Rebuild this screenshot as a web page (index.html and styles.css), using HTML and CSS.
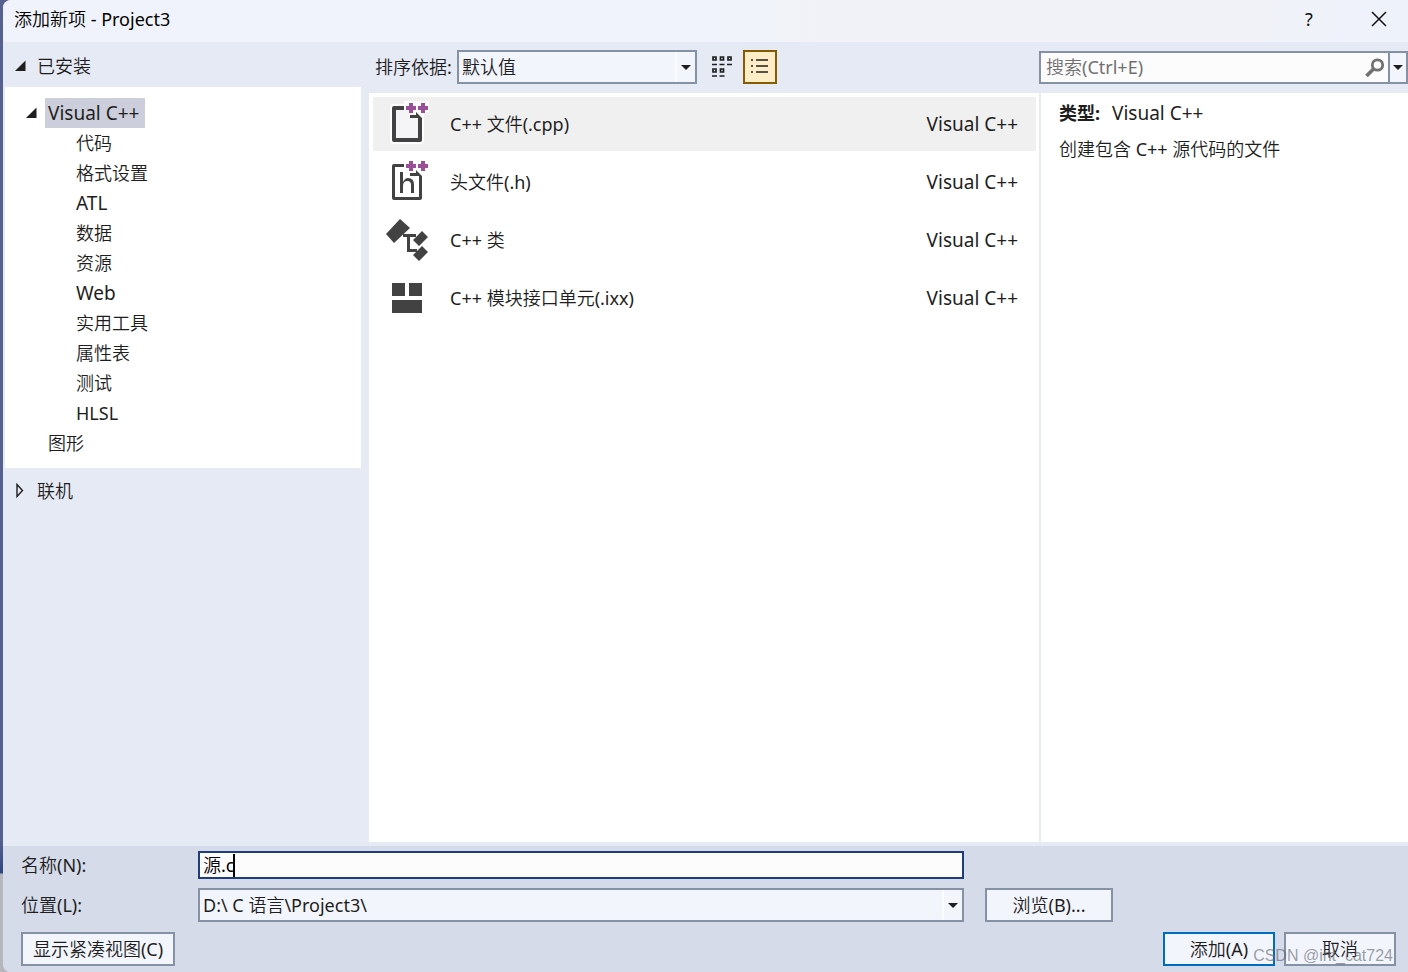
FILE: index.html
```html
<!DOCTYPE html>
<html lang="zh-CN">
<head>
<meta charset="utf-8">
<title>添加新项 - Project3</title>
<link rel="stylesheet" href="styles.css">
</head>
<body>
<div class="dialog">
  <header class="titlebar">
    <h1 class="title">添加新项 - Project3</h1>
    <button class="title-btn help" type="button" aria-label="帮助">?</button>
    <button class="title-btn" type="button" aria-label="关闭">
      <svg width="16" height="16" viewBox="0 0 16 16"><path d="M1 1 15 15M15 1 1 15" stroke="#111" stroke-width="1.5" fill="none"/></svg>
    </button>
  </header>

  <div class="main">
    <nav class="sidebar">
      <button class="section" type="button" aria-expanded="true">
        <svg class="twisty" width="12" height="12" viewBox="0 0 12 12"><path d="M10.500 0.500V11H0Z" fill="#1e1e1e"/></svg>已安装
      </button>
      <div class="tree">
        <button class="root" type="button" aria-expanded="true">
          <svg class="twisty" width="12" height="12" viewBox="0 0 12 12"><path d="M10.500 0.500V11H0Z" fill="#1e1e1e"/></svg><span class="selected latin">Visual C++</span>
        </button>
        <ul class="branch">
          <li>代码</li><li>格式设置</li><li class="latin">ATL</li><li>数据</li><li>资源</li><li class="latin">Web</li><li>实用工具</li><li>属性表</li><li>测试</li><li>HLSL</li>
        </ul>
        <div class="leaf">图形</div>
      </div>
      <button class="section online" type="button" aria-expanded="false">
        <svg class="twisty" width="12" height="16" viewBox="0 0 12 16"><path d="M2 1.500V13.500L7.500 7.500Z" fill="none" stroke="#1e1e1e" stroke-width="1.400"/></svg>联机
      </button>
    </nav>

    <section class="center">
      <div class="toolbar">
        <label class="sort-label" for="sort">排序依据:</label>
        <div class="combo sort">
          <select id="sort"><option>默认值</option></select>
          <span class="arrow"></span>
        </div>
        <button class="view" type="button" aria-label="小图标">
          <svg width="22" height="24" viewBox="0 0 22 24"><g fill="none" stroke="#1e1e1e" stroke-width="1.700"><path d="M2 2h3v3H2zM9.500 2h3v3h-3zM17 2h3v3h-3zM2 14h3v3H2zM9.500 14h3v3h-3z"/><path d="M1 9.500h5M8.500 9.500h5M16 9.500h5M1 21h5M8.500 21h5"/></g></svg>
        </button>
        <button class="view active" type="button" aria-label="列表" aria-pressed="true">
          <svg width="18" height="18" viewBox="0 0 18 18"><path d="M0 2h2M5 2h12M0 8h2M5 8h12M0 14h2M5 14h12" stroke="#1e1e1e" stroke-width="1.500"/></svg>
        </button>
      </div>
      <ul class="items">
        <li class="item current">
          <svg class="icon" width="44" height="46" viewBox="0 0 44 46">
            <path d="M7 3h11V0h25v12h-5v27q0 4-4 4H8q-4 0-4-4V7q0-4 3-4Z" fill="#fff"/>
            <path d="M10 9h18v8h4v20H10Z" fill="#f5f5f7"/>
            <path d="M18 5H8Q6 5 6 7v32q0 2 2 2h26q2 0 2-2V17l-6-6v3h-6v3h8v20H10V9h8Z" fill="#424242"/>
            <path d="M24 2h4v3h3v4h-3v3h-4V9h-3V5h3ZM36 2h4v3h3v4h-3v3h-4V9h-3V5h3Z" transform="translate(-1 0)" fill="#9b4f96"/>
          </svg>
          <span>C++ 文件(.cpp)</span><span class="lang latin">Visual C++</span>
        </li>
        <li class="item">
          <svg class="icon" width="44" height="46" viewBox="0 0 44 46">
            <path d="M18 5H8Q6 5 6 7v32q0 2 2 2h26q2 0 2-2V17l-6-6v3h-6v3h9v21H9V8h9Z" fill="#424242"/>
            <path d="M14 13h3v10q2-4 5-4 6 0 6 7v8h-3v-8q0-4-3.500-4Q17 22 17 27v7h-3Z" fill="#424242"/>
            <path d="M23 2h4v3h3v4h-3v3h-4V9h-3V5h3ZM35 2h4v3h3v4h-3v3h-4V9h-3V5h3Z" fill="#9b4f96"/>
          </svg>
          <span>头文件(.h)</span><span class="lang latin">Visual C++</span>
        </li>
        <li class="item">
          <svg class="icon" width="44" height="46" viewBox="0 0 44 46">
            <g fill="#424242"><path d="M14 2 24 11 8 26 0 17ZM36 14l6 6-9 9-6-6ZM36 29l6 6-9 9-6-6Z"/><path d="M17 17h13v3h-6v12h7v3H21V20h-4Z"/></g>
          </svg>
          <span>C++ 类</span><span class="lang latin">Visual C++</span>
        </li>
        <li class="item">
          <svg class="icon" width="44" height="46" viewBox="0 0 44 46"><path d="M6 8h13v13H6ZM23 8h13v13H23ZM6 25h30v13H6Z" fill="#424242"/></svg>
          <span>C++ 模块接口单元(.ixx)</span><span class="lang latin">Visual C++</span>
        </li>
      </ul>
    </section>

    <aside class="details">
      <div class="search">
        <input type="search" aria-label="搜索" placeholder="搜索(Ctrl+E)">
        <button class="find" type="button" aria-label="查找">
          <svg width="20" height="20" viewBox="0 0 20 20"><circle cx="12.500" cy="7" r="5.200" fill="none" stroke="#717171" stroke-width="2.800"/><path d="M8.500 11 1.500 18" stroke="#717171" stroke-width="3.800"/></svg>
        </button>
        <button class="more" type="button" aria-label="搜索选项"><span class="arrow"></span></button>
      </div>
      <div class="info">
        <p><strong>类型:</strong><span class="latin">Visual C++</span></p>
        <p>创建包含 C++ 源代码的文件</p>
      </div>
    </aside>
  </div>

  <footer class="footer">
    <label class="name-label" for="name">名称(N):</label>
    <div class="name-box">
      <input id="name" type="text" value="源.c">
      <span class="caret"></span>
    </div>
    <label class="row-two" for="location">位置(L):</label>
    <div class="combo row-two">
      <select id="location"><option>D:\ C 语言\Project3\</option></select>
      <span class="arrow"></span>
    </div>
    <button class="btn browse row-two" type="button">浏览(B)...</button>
    <div class="actions">
      <button class="btn compact" type="button">显示紧凑视图(C)</button>
      <button class="btn primary" type="button">添加(A)</button>
      <button class="btn" type="button">取消</button>
    </div>
  </footer>
  <div class="watermark">CSDN @int_cat724</div>
</div>
</body>
</html>
```

FILE: styles.css
```css
* { box-sizing: border-box; }

body {
  margin: 0;
  min-height: 100vh;
  display: flex;
  padding-left: 3px;
  background: linear-gradient(#56618f 0, #56618f 840px, #2f457d 873px, #b5b7bd 874px);
  color: #1e1e1e;
  font: 400 18px/30px "Noto Sans", "Noto Sans CJK SC DemiLight", "Noto Sans CJK SC", sans-serif;
}

button, input, select {
  font: inherit;
  color: inherit;
  margin: 0;
  border-radius: 0;
}

button {
  border: 0;
  padding: 0;
  background: none;
}

ul { list-style: none; margin: 0; padding: 0; }

.latin { font-size: 19px; }

.dialog {
  position: relative;
  flex: 1;
  min-width: 0;
  display: flex;
  flex-direction: column;
  background: #e6eaf5;
  border-radius: 8px 0 0 8px;
  overflow: hidden;
}

.titlebar {
  display: flex;
  align-items: center;
  height: 42px;
  padding: 0 21px 4px 11px;
  background: linear-gradient(90deg, #f0f3fb 50%, #f1f2f7 60%, #f1f2f7 85%, #eef2fb);
}

.title { flex: 1; margin: 0; font-size: 18px; font-weight: 400; color: #000; }
.title-btn { display: flex; justify-content: center; align-items: center; width: 16px; height: 30px; color: #111; }
.help { margin-right: 54px; }

.main { flex: 1; display: flex; }

.sidebar { width: 366px; padding: 0 8px 0 2px; }
.section {
  display: flex;
  align-items: center;
  width: 100%;
  height: 45px;
  padding: 3px 0 0 10px;
}
.online { padding-top: 0; }
.section .twisty { margin-right: 10px; }
.tree { padding: 11px 0 10px; background: #fff; }
.root { display: flex; align-items: center; padding-left: 21px; }
.root .twisty { margin-right: 7px; }
.selected { min-width: 100px; padding: 0 3px; text-align: left; background: #cccedb; }
.branch { padding-left: 71px; }
.leaf { padding-left: 43px; }

.center { flex: 1; min-width: 0; display: flex; flex-direction: column; }
.toolbar { display: flex; align-items: center; height: 51px; padding: 0 6px 1px; }
.sort-label { width: 82px; white-space: nowrap; }

.combo { position: relative; height: 34px; }
.combo select {
  width: 100%;
  height: 100%;
  padding: 0 24px 0 3px;
  border: 2px solid #8591a5;
  background: #f2f5fc;
  appearance: none;
}
.combo .arrow {
  position: absolute;
  top: 2px;
  right: 2px;
  bottom: 2px;
  width: 20px;
  border-left: 2px solid #fcfcfc;
  pointer-events: none;
}
.arrow { display: flex; justify-content: center; align-items: center; }
.arrow::after {
  content: "";
  border: 5px solid transparent;
  border-top-color: #1e1e1e;
  border-bottom: 0;
}
.sort { width: 240px; }

.view { display: flex; align-items: center; justify-content: center; width: 34px; height: 34px; margin-left: 4px; }
.sort + .view { margin-left: 8px; }
.active { border: 2px solid #855d00; background: #ffedc8; }

.items { flex: 1; margin-bottom: 4px; padding: 4px 3px 4px 4px; background: #fff; }
.item { display: flex; align-items: center; height: 54px; margin-bottom: 4px; padding: 0 18px 0 13px; }
.current { background: #f0f0f0; }
.icon { margin-right: 20px; flex: none; }
.lang { margin-left: auto; }

.details { width: 369px; display: flex; flex-direction: column; }
.search {
  display: flex;
  height: 33px;
  margin: 9px 0;
  border: 2px solid #8591a5;
  background: #fcfcfc;
}
.search input { flex: 1; min-width: 0; padding: 0 5px 2px; border: 0; background: none; outline: 0; appearance: none; }
.search input::placeholder { color: #717171; opacity: 1; }
.find { width: 26px; display: flex; align-items: center; justify-content: center; }
.more { width: 18px; border-left: 2px solid #8591a5; background: #f2f5fc; display: flex; align-items: center; justify-content: center; }
.info { flex: 1; margin: 0 0 4px 2px; padding: 5px 18px; background: #fff; }
.info p { margin: 0 0 6px; }
.info strong { margin-right: 12px; font-family: "Noto Sans", "Noto Sans CJK SC", sans-serif; font-weight: 700; }

.footer {
  display: grid;
  grid-template-columns: 177px minmax(0, 766px) 149px 1fr;
  align-items: center;
  padding: 5px 12px 6px 18px;
  background: #d5dbe9;
}
.name-label { line-height: 28px; }
.name-box { position: relative; height: 28px; grid-column: 2; }
.name-box input {
  display: block;
  width: 100%;
  height: 28px;
  padding: 0 3px;
  border: 2px solid #1f3d7a;
  background: #fcfcfc;
  color: #000;
  outline: 0;
}
.caret { position: absolute; left: 35px; top: 3px; width: 2px; height: 23px; background: #000; }
.row-two { margin-top: 9px; }
label.row-two { grid-column: 1; }
.btn { height: 34px; min-width: 112px; border: 2px solid #8591a5; background: #f2f5fc; }
.browse { margin-left: 21px; width: 128px; }
.actions { grid-column: 1 / -1; display: flex; gap: 9px; margin-top: 10px; }
.compact { width: 154px; margin-right: auto; }
.primary { border-color: #006cbe; }

.watermark {
  position: absolute;
  right: 15px;
  bottom: 4px;
  font: 400 16px/24px "Liberation Sans", sans-serif;
  color: rgba(90, 95, 105, 0.6);
  pointer-events: none;
}
```
